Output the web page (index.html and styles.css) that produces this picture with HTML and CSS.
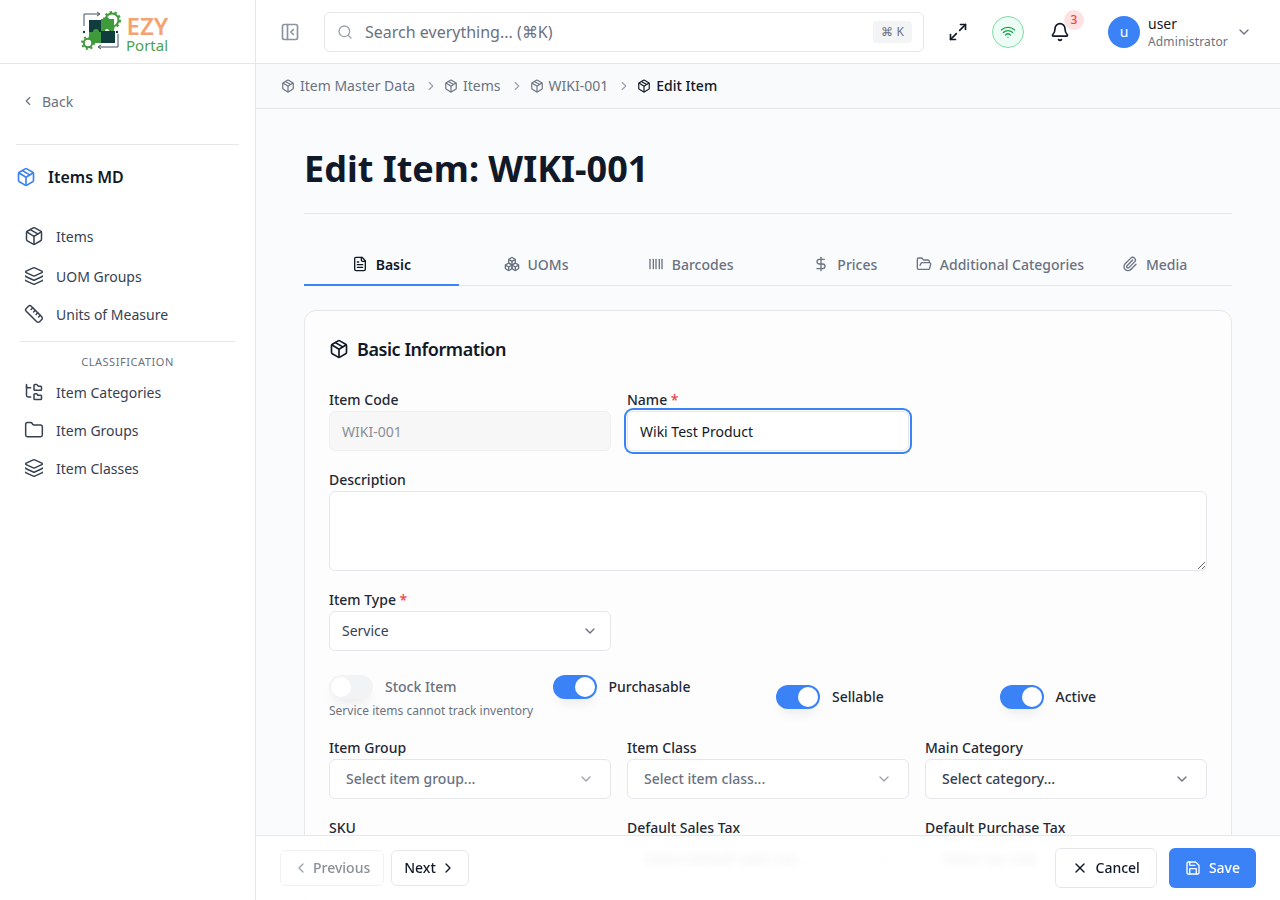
FILE: index.html
```html
<!DOCTYPE html>
<html>
<head>
    <title>Edit Item</title>
    <link rel="stylesheet" href="styles.css">
</head>
<body>
    <!-- Icon sprite -->
    <svg class="sprite" xmlns="http://www.w3.org/2000/svg">
        <symbol id="i-package" viewBox="0 0 24 24"><path d="M11 21.73a2 2 0 0 0 2 0l7-4A2 2 0 0 0 21 16V8a2 2 0 0 0-1-1.73l-7-4a2 2 0 0 0-2 0l-7 4A2 2 0 0 0 3 8v8a2 2 0 0 0 1 1.73z"/><path d="M12 22V12"/><path d="m3.3 7 7.703 4.734a2 2 0 0 0 1.994 0L20.7 7"/><path d="m7.5 4.27 9 5.15"/></symbol>
        <symbol id="i-layers" viewBox="0 0 24 24"><path d="M12.83 2.18a2 2 0 0 0-1.66 0L2.6 6.08a1 1 0 0 0 0 1.83l8.58 3.91a2 2 0 0 0 1.66 0l8.58-3.9a1 1 0 0 0 0-1.83z"/><path d="M2 12a1 1 0 0 0 .58.91l8.6 3.91a2 2 0 0 0 1.65 0l8.58-3.9A1 1 0 0 0 22 12"/><path d="M2 17a1 1 0 0 0 .58.91l8.6 3.91a2 2 0 0 0 1.65 0l8.58-3.9A1 1 0 0 0 22 17"/></symbol>
        <symbol id="i-ruler" viewBox="0 0 24 24"><path d="M21.3 15.3a2.4 2.4 0 0 1 0 3.4l-2.6 2.6a2.4 2.4 0 0 1-3.4 0L2.7 8.7a2.41 2.41 0 0 1 0-3.4l2.6-2.6a2.41 2.41 0 0 1 3.4 0Z"/><path d="m14.5 12.5 2-2"/><path d="m11.5 9.5 2-2"/><path d="m8.5 6.5 2-2"/><path d="m17.5 15.5 2-2"/></symbol>
        <symbol id="i-folder-tree" viewBox="0 0 24 24"><path d="M20 10a1 1 0 0 0 1-1V6a1 1 0 0 0-1-1h-2.5a1 1 0 0 1-.8-.4l-.9-1.2A1 1 0 0 0 15 3h-2a1 1 0 0 0-1 1v5a1 1 0 0 0 1 1Z"/><path d="M20 21a1 1 0 0 0 1-1v-3a1 1 0 0 0-1-1h-2.9a1 1 0 0 1-.88-.55l-.42-.85a1 1 0 0 0-.92-.6H13a1 1 0 0 0-1 1v5a1 1 0 0 0 1 1Z"/><path d="M3 5a2 2 0 0 0 2 2h3"/><path d="M3 3v13a2 2 0 0 0 2 2h3"/></symbol>
        <symbol id="i-folder" viewBox="0 0 24 24"><path d="M20 20a2 2 0 0 0 2-2V8a2 2 0 0 0-2-2h-7.9a2 2 0 0 1-1.69-.9L9.6 3.9A2 2 0 0 0 7.93 3H4a2 2 0 0 0-2 2v13a2 2 0 0 0 2 2Z"/></symbol>
        <symbol id="i-folder-open" viewBox="0 0 24 24"><path d="m6 14 1.5-2.9A2 2 0 0 1 9.24 10H20a2 2 0 0 1 1.94 2.5l-1.54 6a2 2 0 0 1-1.95 1.5H4a2 2 0 0 1-2-2V5a2 2 0 0 1 2-2h3.9a2 2 0 0 1 1.69.9l.81 1.2a2 2 0 0 0 1.67.9H18a2 2 0 0 1 2 2v2"/></symbol>
        <symbol id="i-panel" viewBox="0 0 24 24"><rect width="18" height="18" x="3" y="3" rx="2"/><path d="M9 3v18"/><path d="m16 15-3-3 3-3"/></symbol>
        <symbol id="i-search" viewBox="0 0 24 24"><path d="m21 21-4.34-4.34"/><circle cx="11" cy="11" r="8"/></symbol>
        <symbol id="i-maximize" viewBox="0 0 24 24"><path d="M15 3h6v6"/><path d="m21 3-7 7"/><path d="m3 21 7-7"/><path d="M9 21H3v-6"/></symbol>
        <symbol id="i-wifi" viewBox="0 0 24 24"><path d="M12 20h.01"/><path d="M2 8.82a15 15 0 0 1 20 0"/><path d="M5 12.859a10 10 0 0 1 14 0"/><path d="M8.5 16.429a5 5 0 0 1 7 0"/></symbol>
        <symbol id="i-bell" viewBox="0 0 24 24"><path d="M10.268 21a2 2 0 0 0 3.464 0"/><path d="M3.262 15.326A1 1 0 0 0 4 17h16a1 1 0 0 0 .74-1.673C19.41 13.956 18 12.499 18 8A6 6 0 0 0 6 8c0 4.499-1.411 5.956-2.738 7.326"/></symbol>
        <symbol id="i-file" viewBox="0 0 24 24"><path d="M15 2H6a2 2 0 0 0-2 2v16a2 2 0 0 0 2 2h12a2 2 0 0 0 2-2V7Z"/><path d="M14 2v4a2 2 0 0 0 2 2h4"/><path d="M10 9H8"/><path d="M16 13H8"/><path d="M16 17H8"/></symbol>
        <symbol id="i-boxes" viewBox="0 0 24 24"><path d="M2.97 12.92A2 2 0 0 0 2 14.63v3.24a2 2 0 0 0 .97 1.71l3 1.8a2 2 0 0 0 2.06 0L12 19v-5.5l-5-3-4.03 2.42Z"/><path d="m7 16.5-4.74-2.85"/><path d="m7 16.5 5-3"/><path d="M7 16.5v5.17"/><path d="M12 13.5V19l3.97 2.38a2 2 0 0 0 2.06 0l3-1.8a2 2 0 0 0 .97-1.71v-3.24a2 2 0 0 0-.97-1.71L17 10.5l-5 3Z"/><path d="m17 16.5-5-3"/><path d="m17 16.5 4.74-2.85"/><path d="M17 16.5v5.17"/><path d="M7.97 4.42A2 2 0 0 0 7 6.13v4.37l5 3 5-3V6.13a2 2 0 0 0-.97-1.71l-3-1.8a2 2 0 0 0-2.06 0l-3 1.8Z"/><path d="M12 8 7.26 5.15"/><path d="m12 8 4.74-2.85"/><path d="M12 13.5V8"/></symbol>
        <symbol id="i-barcode" viewBox="0 0 24 24"><path d="M3 5v14"/><path d="M8 5v14"/><path d="M12 5v14"/><path d="M17 5v14"/><path d="M21 5v14"/></symbol>
        <symbol id="i-dollar" viewBox="0 0 24 24"><line x1="12" x2="12" y1="2" y2="22"/><path d="M17 5H9.5a3.5 3.5 0 0 0 0 7h5a3.5 3.5 0 0 1 0 7H6"/></symbol>
        <symbol id="i-clip" viewBox="0 0 24 24"><path d="M13.234 20.252 21 12.3"/><path d="m16 6-8.414 8.586a2 2 0 0 0 0 2.828 2 2 0 0 0 2.828 0l8.414-8.586a4 4 0 0 0 0-5.656 4 4 0 0 0-5.656 0l-8.415 8.585a6 6 0 1 0 8.486 8.486"/></symbol>
        <symbol id="i-save" viewBox="0 0 24 24"><path d="M15.2 3a2 2 0 0 1 1.4.6l3.8 3.8a2 2 0 0 1 .6 1.4V19a2 2 0 0 1-2 2H5a2 2 0 0 1-2-2V5a2 2 0 0 1 2-2z"/><path d="M17 21v-7a1 1 0 0 0-1-1H8a1 1 0 0 0-1 1v7"/><path d="M7 3v4a1 1 0 0 0 1 1h7"/></symbol>
        <symbol id="i-x" viewBox="0 0 24 24"><path d="M18 6 6 18"/><path d="m6 6 12 12"/></symbol>
        <symbol id="i-left" viewBox="0 0 24 24"><path d="m15 18-6-6 6-6"/></symbol>
        <symbol id="i-right" viewBox="0 0 24 24"><path d="m9 18 6-6-6-6"/></symbol>
        <symbol id="i-down" viewBox="0 0 24 24"><path d="m6 9 6 6 6-6"/></symbol>
    </svg>

    <div class="app">
        <aside class="sidebar">
            <div class="logo">
                <svg class="logo-mark" viewBox="0 -11 100 63" xmlns="http://www.w3.org/2000/svg">
                    <path d="M3 15V3h15M16 1l3 2-3 2M37 23v13H18M20 34l-3 2 3 2" fill="none" stroke="#3d5560" stroke-width="1"/>
                    <rect x="8" y="9" width="13" height="12" fill="#0f3d3e"/>
                    <rect x="19" y="20" width="15" height="12" fill="#0f3d3e"/>
                    <path d="M20 8h4a2 2 0 0 1 4 0h5v12h-5a2 2 0 0 0-4 0h-4z" fill="#3f9a3c"/>
                    <path d="M8 21h4a3 3 0 0 1 6 0h2v11h-9v-3H8z" fill="#3f9a3c"/>
                    <circle cx="31" cy="9" r="6.5" fill="none" stroke="#3f9a3c" stroke-width="2"/>
                    <circle cx="31" cy="9" r="8" fill="none" stroke="#3f9a3c" stroke-width="2" stroke-dasharray="2.5 2.5"/>
                    <circle cx="7" cy="32" r="4.2" fill="#fff" stroke="#3f9a3c" stroke-width="2"/>
                    <circle cx="7" cy="32" r="6" fill="none" stroke="#3f9a3c" stroke-width="2" stroke-dasharray="2 2.7"/>
                    <circle cx="3" cy="21" r="1.2" fill="#0f3d3e"/>
                    <circle cx="36" cy="21" r="1.2" fill="#0f3d3e"/>
                    <text class="logo-ezy" x="45.5" y="24">EZY</text>
                    <text class="logo-portal" x="45" y="39.5">Portal</text>
                </svg>
            </div>
            <div class="side-body">
                <div class="back"><svg class="icon ic-14"><use href="#i-left"/></svg><span>Back</span></div>
                <div class="side-title"><svg class="icon ic-20 blue"><use href="#i-package"/></svg><span>Items MD</span></div>
                <nav class="side-nav">
                    <a class="nav-item first"><svg class="icon ic-20"><use href="#i-package"/></svg>Items</a>
                    <a class="nav-item"><svg class="icon ic-20"><use href="#i-layers"/></svg>UOM Groups</a>
                    <a class="nav-item"><svg class="icon ic-20"><use href="#i-ruler"/></svg>Units of Measure</a>
                    <div class="nav-sep"></div>
                    <div class="nav-group">CLASSIFICATION</div>
                    <a class="nav-item"><svg class="icon ic-20"><use href="#i-folder-tree"/></svg>Item Categories</a>
                    <a class="nav-item"><svg class="icon ic-20"><use href="#i-folder"/></svg>Item Groups</a>
                    <a class="nav-item"><svg class="icon ic-20"><use href="#i-layers"/></svg>Item Classes</a>
                </nav>
            </div>
        </aside>

        <div class="main">
            <header class="topbar">
                <svg class="icon ic-20 panel-btn"><use href="#i-panel"/></svg>
                <div class="search">
                    <svg class="icon ic-16"><use href="#i-search"/></svg>
                    <span class="search-text">Search everything... (⌘K)</span>
                    <span class="kbd">⌘ K</span>
                </div>
                <svg class="icon ic-20 dark max-btn"><use href="#i-maximize"/></svg>
                <div class="wifi"><svg class="icon ic-16"><use href="#i-wifi"/></svg></div>
                <div class="bell">
                    <svg class="icon ic-20 dark"><use href="#i-bell"/></svg>
                    <span class="badge">3</span>
                </div>
                <div class="user">
                    <div class="avatar">u</div>
                    <div class="user-info">
                        <span class="user-name">user</span>
                        <span class="user-role">Administrator</span>
                    </div>
                    <svg class="icon ic-16"><use href="#i-down"/></svg>
                </div>
            </header>

            <div class="crumbs">
                <svg class="icon ic-14"><use href="#i-package"/></svg><span>Item Master Data</span>
                <svg class="icon ic-14 sep"><use href="#i-right"/></svg>
                <svg class="icon ic-14"><use href="#i-package"/></svg><span>Items</span>
                <svg class="icon ic-14 sep"><use href="#i-right"/></svg>
                <svg class="icon ic-14"><use href="#i-package"/></svg><span>WIKI-001</span>
                <svg class="icon ic-14 sep"><use href="#i-right"/></svg>
                <svg class="icon ic-14 dark"><use href="#i-package"/></svg><span class="current">Edit Item</span>
            </div>

            <div class="content">
                <h1 class="page-title">Edit Item: WIKI-001</h1>

                <div class="tabs">
                    <div class="tab active"><svg class="icon ic-16"><use href="#i-file"/></svg>Basic</div>
                    <div class="tab"><svg class="icon ic-16"><use href="#i-boxes"/></svg>UOMs</div>
                    <div class="tab"><svg class="icon ic-16"><use href="#i-barcode"/></svg>Barcodes</div>
                    <div class="tab"><svg class="icon ic-16"><use href="#i-dollar"/></svg>Prices</div>
                    <div class="tab"><svg class="icon ic-16"><use href="#i-folder-open"/></svg>Additional Categories</div>
                    <div class="tab"><svg class="icon ic-16"><use href="#i-clip"/></svg>Media</div>
                </div>

                <section class="card">
                    <h2 class="card-title"><svg class="icon ic-20 dark"><use href="#i-package"/></svg>Basic Information</h2>

                    <div class="row three">
                        <div class="field">
                            <label>Item Code</label>
                            <input class="input" value="WIKI-001" disabled>
                        </div>
                        <div class="field">
                            <label>Name <em>*</em></label>
                            <input class="input focused" value="Wiki Test Product">
                        </div>
                    </div>

                    <div class="row">
                        <div class="field">
                            <label>Description</label>
                            <textarea class="input area"></textarea>
                        </div>
                    </div>

                    <div class="row three">
                        <div class="field">
                            <label>Item Type <em>*</em></label>
                            <div class="select tight">Service<svg class="icon ic-16"><use href="#i-down"/></svg></div>
                        </div>
                    </div>

                    <div class="switches">
                        <div class="switch-cell">
                            <div class="switch-line">
                                <span class="switch off"></span><span class="switch-label muted">Stock Item</span>
                            </div>
                            <p class="hint">Service items cannot track inventory</p>
                        </div>
                        <div class="switch-cell">
                            <div class="switch-line">
                                <span class="switch"></span><span class="switch-label">Purchasable</span>
                            </div>
                        </div>
                        <div class="switch-cell centered">
                            <div class="switch-line">
                                <span class="switch"></span><span class="switch-label">Sellable</span>
                            </div>
                        </div>
                        <div class="switch-cell centered">
                            <div class="switch-line">
                                <span class="switch"></span><span class="switch-label">Active</span>
                            </div>
                        </div>
                    </div>

                    <div class="row three">
                        <div class="field">
                            <label>Item Group</label>
                            <div class="select placeholder">Select item group...<svg class="icon ic-16"><use href="#i-down"/></svg></div>
                        </div>
                        <div class="field">
                            <label>Item Class</label>
                            <div class="select placeholder">Select item class...<svg class="icon ic-16"><use href="#i-down"/></svg></div>
                        </div>
                        <div class="field">
                            <label>Main Category</label>
                            <div class="select medium">Select category...<svg class="icon ic-16"><use href="#i-down"/></svg></div>
                        </div>
                    </div>

                    <div class="row three">
                        <div class="field">
                            <label>SKU</label>
                            <input class="input">
                        </div>
                        <div class="field">
                            <label>Default Sales Tax</label>
                            <div class="select placeholder">Select default sales tax...<svg class="icon ic-16"><use href="#i-down"/></svg></div>
                        </div>
                        <div class="field">
                            <label>Default Purchase Tax</label>
                            <div class="select placeholder">Select tax rate<svg class="icon ic-16"><use href="#i-down"/></svg></div>
                        </div>
                    </div>
                </section>
            </div>

            <footer class="actions">
                <button class="btn small disabled"><svg class="icon ic-16"><use href="#i-left"/></svg>Previous</button>
                <button class="btn small next">Next<svg class="icon ic-16 dark"><use href="#i-right"/></svg></button>
                <button class="btn cancel"><svg class="icon ic-16 dark"><use href="#i-x"/></svg>Cancel</button>
                <button class="btn primary"><svg class="icon ic-16 white"><use href="#i-save"/></svg>Save</button>
            </footer>
        </div>
    </div>
</body>
</html>
```

FILE: styles.css
```css
* {
    box-sizing: border-box;
}
html, body {
    margin: 0;
    height: 100%;
}
body {
    font-family: "Noto Sans", "Open Sans", sans-serif;
    font-size: 14px;
    color: #111827;
    background: #fff;
    overflow: hidden;
}
.sprite {
    display: none;
}
.app {
    display: flex;
    height: 100vh;
}

/* Icons */
.icon {
    flex: none;
    fill: none;
    stroke: #6b7280;
    stroke-width: 2;
    stroke-linecap: round;
    stroke-linejoin: round;
}
.ic-14 { width: 14px; height: 14px; }
.ic-16 { width: 16px; height: 16px; }
.ic-20 { width: 20px; height: 20px; }
.dark { stroke: #111827; }
.blue { stroke: #3b82f6; }
.white { stroke: #fff; }

/* Sidebar */
.sidebar {
    width: 256px;
    flex: none;
    border-right: 1px solid #e5e7eb;
    background: #fff;
}
.logo {
    height: 64px;
    border-bottom: 1px solid #e5e7eb;
    display: flex;
    align-items: center;
    justify-content: center;
    padding-left: 7px;
}
.logo-mark {
    width: 100px;
    height: 63px;
}
.logo-ezy {
    font-size: 24px;
    font-weight: 600;
    fill: #f4a26f;
}
.logo-portal {
    font-size: 15px;
    fill: #4c9f50;
}
.side-body {
    padding: 0 16px;
}
.back {
    height: 81px;
    border-bottom: 1px solid #e5e7eb;
    display: flex;
    align-items: center;
    gap: 7px;
    padding: 0 0 6px 5px;
    color: #6b7280;
}
.side-title {
    display: flex;
    align-items: center;
    gap: 12px;
    height: 63px;
    padding-top: 1px;
    font-size: 16px;
    font-weight: 600;
    color: #111827;
}
.side-nav {
    display: flex;
    flex-direction: column;
    padding: 9px 4px 0;
}
.nav-item {
    height: 38px;
    display: flex;
    align-items: center;
    gap: 12px;
    padding-left: 4px;
    color: #374151;
}
.nav-item .icon {
    stroke: #374151;
    stroke-width: 1.8;
}
.nav-item.first {
    margin-bottom: 2px;
}
.nav-sep {
    border-top: 1px solid #e5e7eb;
    margin-top: 8px;
}
.nav-group {
    font-size: 11px;
    line-height: 16px;
    letter-spacing: 0.55px;
    text-align: center;
    color: #6b7280;
    margin: 12px 0 3px;
}

/* Main column */
.main {
    flex: 1;
    min-width: 0;
    position: relative;
    display: flex;
    flex-direction: column;
    background: #f9fbfd;
}
.topbar {
    height: 64px;
    flex: none;
    background: #fff;
    border-bottom: 1px solid #e5e7eb;
    display: flex;
    align-items: center;
    padding: 0 28px 0 24px;
}
.panel-btn {
    margin-right: 24px;
    stroke: #8b93a1;
}
.search {
    width: 600px;
    height: 40px;
    flex: none;
    border: 1px solid #e5e7eb;
    border-radius: 6px;
    background: #fff;
    display: flex;
    align-items: center;
    gap: 12px;
    padding: 0 11px 0 12px;
}
.search .icon {
    stroke: #9ca3af;
}
.search-text {
    flex: 1;
    font-size: 16px;
    color: #6b7280;
}
.kbd {
    height: 22px;
    padding: 0 8px;
    border-radius: 4px;
    background: #f3f4f6;
    font-size: 12px;
    line-height: 22px;
    color: #6b7280;
}
.max-btn {
    margin-left: 24px;
}
.wifi {
    width: 32px;
    height: 32px;
    flex: none;
    margin-left: 24px;
    border: 1px solid #86d7ab;
    border-radius: 50%;
    background: #ecfdf5;
    display: flex;
    align-items: center;
    justify-content: center;
}
.wifi .icon {
    stroke: #16a34a;
}
.bell {
    position: relative;
    display: flex;
    margin-left: 26px;
}
.badge {
    position: absolute;
    top: -12px;
    right: -14px;
    width: 20px;
    height: 20px;
    border-radius: 50%;
    background: #fee2e2;
    color: #ef4444;
    font-size: 12px;
    font-weight: 500;
    line-height: 20px;
    text-align: center;
}
.user {
    display: flex;
    align-items: center;
    margin-left: 38px;
}
.avatar {
    width: 32px;
    height: 32px;
    border-radius: 50%;
    background: #3b82f6;
    color: #fff;
    display: flex;
    align-items: center;
    justify-content: center;
}
.user-info {
    display: flex;
    flex-direction: column;
    margin: 0 8px;
    padding-top: 2px;
    width: 80px;
}
.user-name {
    font-size: 14px;
    line-height: 18px;
    color: #111827;
}
.user-role {
    font-size: 12px;
    line-height: 18px;
    letter-spacing: 0.15px;
    white-space: nowrap;
    color: #6b7280;
}

/* Breadcrumbs */
.crumbs {
    height: 45px;
    flex: none;
    background: #f8fafc;
    border-bottom: 1px solid #e5e7eb;
    display: flex;
    align-items: center;
    gap: 5px;
    padding: 0 24px 1px 25px;
    color: #6b7280;
}
.crumbs .sep {
    margin: 0 1px 0 4px;
    stroke: #9ca3af;
}
.crumbs .current {
    color: #111827;
    font-weight: 500;
}

/* Page */
.content {
    flex: 1;
    min-height: 0;
    overflow: hidden;
    padding: 40px 48px 0;
}
.page-title {
    margin: 0 0 30px;
    padding-bottom: 24px;
    border-bottom: 1px solid #e5e7eb;
    font-size: 36px;
    font-weight: 700;
    line-height: 40px;
    color: #111827;
}
.tabs {
    display: grid;
    grid-template-columns: repeat(6, minmax(0, 1fr));
    border-bottom: 1px solid #e5e7eb;
    margin-bottom: 24px;
}
.tab {
    height: 42px;
    margin-bottom: -1px;
    border-bottom: 2px solid transparent;
    display: flex;
    align-items: center;
    justify-content: center;
    gap: 8px;
    font-weight: 500;
    color: #6b7280;
    white-space: nowrap;
}
.tab.active {
    color: #111827;
    font-weight: 600;
    border-bottom-color: #3b82f6;
}
.tab.active .icon {
    stroke: #111827;
}
.card {
    border: 1px solid #e5e7eb;
    border-radius: 12px;
    background: #fdfdfe;
    padding: 24px;
}
.card-title {
    margin: 0 0 26px;
    display: flex;
    align-items: center;
    gap: 8px;
    font-size: 18px;
    font-weight: 600;
    line-height: 28px;
    letter-spacing: -0.45px;
    color: #111827;
}
.row {
    margin-bottom: 18px;
}
.row.three {
    display: grid;
    grid-template-columns: repeat(3, 1fr);
    gap: 16px;
}
.field {
    display: flex;
    flex-direction: column;
}
.field label {
    font-weight: 500;
    line-height: 22px;
    color: #1f2937;
}
.field em {
    font-style: normal;
    color: #ef4444;
}
.input {
    display: block;
    width: 100%;
    height: 40px;
    padding: 0 12px;
    border: 1px solid #e5e7eb;
    border-radius: 6px;
    background: #fff;
    font-family: inherit;
    font-size: 14px;
    color: #111827;
    outline: none;
}
.input:disabled {
    background: #f7f7f7;
    border-color: #eeeff1;
    color: #8b8f96;
}
.input.focused {
    box-shadow: 0 0 0 1px #fff, 0 0 0 3px #3b82f6;
}
.area {
    height: 80px;
    padding: 8px 12px;
}
.select {
    height: 40px;
    padding: 0 16px 2px;
    border: 1px solid #e5e7eb;
    border-radius: 6px;
    background: #fff;
    display: flex;
    align-items: center;
    justify-content: space-between;
    color: #374151;
}
.select .icon {
    margin-top: 2px;
}
.select.tight {
    padding: 0 12px 2px;
}
.select.medium {
    font-weight: 500;
}
.select.placeholder {
    font-weight: 500;
    color: #6b7280;
}
.select.placeholder .icon {
    stroke: #9ca3af;
}

/* Switches */
.switches {
    display: grid;
    grid-template-columns: repeat(4, 1fr);
    gap: 16px;
    margin: 24px 0 18px;
    min-height: 44px;
}
.switch-cell.centered {
    align-self: center;
}
.switch-line {
    display: flex;
    align-items: center;
    gap: 12px;
}
.switch {
    position: relative;
    width: 44px;
    height: 24px;
    flex: none;
    border-radius: 12px;
    background: #3b82f6;
    box-shadow: 0 8px 12px -4px rgba(0, 0, 0, 0.08);
}
.switch::after {
    content: "";
    position: absolute;
    top: 2px;
    left: 22px;
    width: 20px;
    height: 20px;
    border-radius: 50%;
    background: #fff;
}
.switch.off {
    background: #f1f3f5;
}
.switch.off::after {
    left: 2px;
}
.switch-label {
    padding-bottom: 2px;
    font-weight: 500;
    color: #1f2937;
}
.switch-label.muted {
    color: #6b7280;
}
.hint {
    margin: 4px 0 0;
    font-size: 12px;
    line-height: 16px;
    color: #6b7280;
}

.actions {
    position: absolute;
    left: 0;
    right: 0;
    bottom: 0;
    height: 65px;
    border-top: 1px solid #e5e7eb;
    background: rgba(255, 255, 255, 0.88);
    backdrop-filter: blur(4px);
    display: flex;
    align-items: center;
    gap: 7px;
    padding: 0 24px;
}
.btn {
    height: 40px;
    border: 1px solid #e5e7eb;
    border-radius: 6px;
    background: #fff;
    display: flex;
    align-items: center;
    gap: 8px;
    padding: 0 16px 2px;
    font-family: inherit;
    font-size: 14px;
    font-weight: 500;
    color: #111827;
}
.btn .icon {
    margin-top: 2px;
}
.btn.small {
    height: 36px;
    padding: 0 12px 2px;
    gap: 4px;
}
.btn.disabled {
    padding-right: 13px;
    color: #8b8f96;
    border-color: #eef0f2;
}
.btn.disabled .icon {
    stroke: #9ca3af;
}
.btn.cancel {
    margin-left: auto;
}
.btn.primary {
    margin-left: 5px;
    background: #3b82f6;
    border: 0;
    color: #fff;
}
```
